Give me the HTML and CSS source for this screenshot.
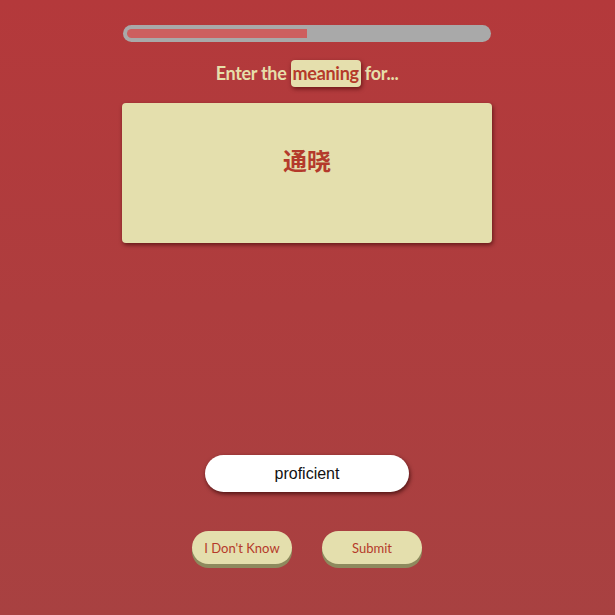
FILE: index.html
```html
<!DOCTYPE html>
<html>
<head>
<meta charset="utf-8">
<link rel="stylesheet" href="styles.css">
</head>
<body>
<main class="quiz">
  <div class="progress"><div class="progress-fill" style="width: 50%"></div></div>
  <h1 class="prompt">Enter the <span class="kind">meaning</span> for...</h1>
  <div class="card"><span class="term">通晓</span></div>
  <div class="answer-row">
    <input class="answer" type="text" value="proficient">
  </div>
  <div class="actions">
    <button class="btn">I Don't Know</button>
    <button class="btn">Submit</button>
  </div>
</main>
</body>
</html>
```
FILE: styles.css
```css
html, body {
  margin: 0;
  height: 100%;
}
body {
  box-sizing: border-box;
  padding-right: 1px;
  background: linear-gradient(to bottom, #b4393b 0%, #a84141 100%);
  font-family: Lato, "Open Sans", sans-serif;
}
.quiz {
  width: 370px;
  margin: 0 auto;
  display: flex;
  flex-direction: column;
  align-items: center;
  padding-top: 25px;
}
.progress {
  box-sizing: border-box;
  width: 368px;
  height: 17px;
  padding: 4px;
  background: #a9a9a9;
  border-radius: 9px;
  display: flex;
}
.progress-fill {
  height: 9px;
  background: #cd5f5f;
  border-radius: 5px 0 0 5px;
}
.prompt {
  margin: 16px 0 0;
  font-size: 18px;
  font-weight: 700;
  color: #e6dfaa;
  letter-spacing: -0.3px;
  height: 30px;
  line-height: 30px;
}
.kind {
  display: inline-block;
  background: #e5dfad;
  color: #b53a2a;
  border-radius: 4px;
  padding: 0 2px;
  line-height: 27px;
  box-shadow: 1px 2px 4px rgba(60, 0, 0, 0.6);
}
.card {
  box-sizing: border-box;
  margin-top: 15px;
  width: 370px;
  height: 140px;
  background: #e4dfad;
  border-radius: 4px;
  box-shadow: 1px 2px 4px rgba(50, 0, 0, 0.6);
  display: flex;
  align-items: center;
  justify-content: center;
}
.term {
  font-family: "Noto Sans CJK SC", sans-serif;
  font-weight: 700;
  font-size: 24px;
  color: #b43a2b;
  margin-top: -28px;
}
.answer-row {
  margin-top: 212px;
}
.answer {
  box-sizing: border-box;
  width: 204px;
  height: 37px;
  border: none;
  border-radius: 19px;
  background: #fff;
  text-align: center;
  font-family: "Liberation Sans", Arial, sans-serif;
  font-size: 16px;
  color: #111;
  box-shadow: 1px 2px 4px rgba(40, 0, 0, 0.7);
  outline: none;
}
.actions {
  margin-top: 39px;
  display: flex;
  gap: 30px;
}
.btn {
  width: 100px;
  height: 33px;
  border: none;
  border-radius: 17px;
  background: #e4dfad;
  color: #b53a2a;
  font-family: Lato, "Open Sans", sans-serif;
  font-size: 13px;
  padding-top: 2px;
  box-shadow: 0 4px 0 #8e8a5e;
  cursor: pointer;
}
```
